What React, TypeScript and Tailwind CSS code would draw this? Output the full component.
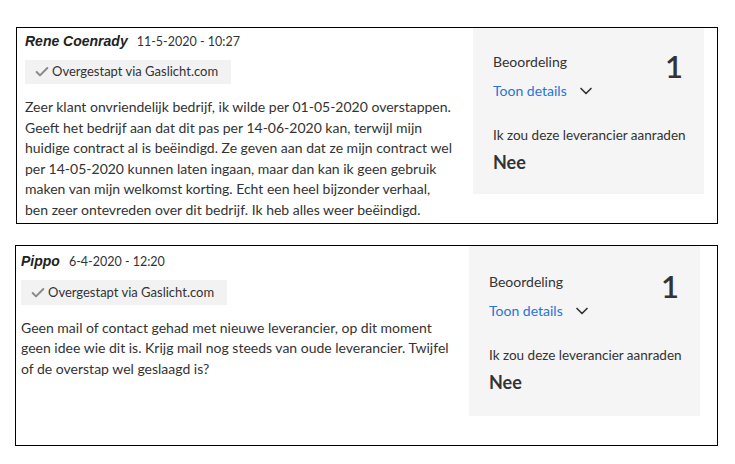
import { Check, ChevronDown } from "lucide-react";

type Review = {
    name: string;
    date: string;
    lines: string[];
    score: number;
    advise: string;
};

const reviews: Review[] = [
    {
        name: "Rene Coenrady",
        date: "11-5-2020 - 10:27",
        lines: [
            "Zeer klant onvriendelijk bedrijf, ik wilde per 01-05-2020 overstappen.",
            "Geeft het bedrijf aan dat dit pas per 14-06-2020 kan, terwijl mijn",
            "huidige contract al is beëindigd. Ze geven aan dat ze mijn contract wel",
            "per 14-05-2020 kunnen laten ingaan, maar dan kan ik geen gebruik",
            "maken van mijn welkomst korting. Echt een heel bijzonder verhaal,",
            "ben zeer ontevreden over dit bedrijf. Ik heb alles weer beëindigd.",
        ],
        score: 1,
        advise: "Nee",
    },
    {
        name: "Pippo",
        date: "6-4-2020 - 12:20",
        lines: [
            "Geen mail of contact gehad met nieuwe leverancier, op dit moment",
            "geen idee wie dit is. Krijg mail nog steeds van oude leverancier. Twijfel",
            "of de overstap wel geslaagd is?",
        ],
        score: 1,
        advise: "Nee",
    },
];

function Rating({ review, className }: { review: Review; className: string }) {
    return (
        <div className={"bg-[#f5f5f5] w-[231px] pl-5 pr-[21px] " + className}>
            <div className="flex justify-between items-start">
                <div>
                    <div className="text-[14px] leading-5 text-[#333]">Beoordeling</div>
                    <button className="mt-[9px] flex items-center gap-[9px] text-[14px] leading-5 text-[#2b73d8]">
                        Toon details
                        <ChevronDown className="w-[20px] h-[20px] text-[#333]" strokeWidth={2} />
                    </button>
                </div>
                <span className="text-[31px] leading-none font-semibold text-[#333] -mt-[1px]">{review.score}</span>
            </div>
            <div className="mt-[24px] whitespace-nowrap text-[13.5px] leading-5 text-[#333]">
                Ik zou deze leverancier aanraden
            </div>
            <div className="mt-[5px] text-[18px] leading-6 font-bold text-[#333]">{review.advise}</div>
        </div>
    );
}

function Body({ review, pl, pt, badgeH }: { review: Review; pl: string; pt: string; badgeH: string }) {
    return (
        <div className={"flex-1 " + pl + " " + pt}>
            <div className="flex items-baseline gap-[9px]">
                <span className="font-['Liberation_Sans',sans-serif] font-bold italic text-[14px] text-[#222]">
                    {review.name}
                </span>
                <span className="text-[12.5px]">{review.date}</span>
            </div>
            <div className={"mt-[8px] inline-flex items-center w-[206px] bg-[#f2f2f2] pl-[9px] text-[13px] " + badgeH}>
                <Check className="w-[16px] h-[16px] text-[#8a8a8a] mr-[2px]" strokeWidth={3} />
                Overgestapt via Gaslicht.com
            </div>
            <p className="mt-[11px] text-[14px] leading-[20.6px] whitespace-nowrap">
                {review.lines.map((line, i) => (
                    <span key={i} className="block">
                        {line}
                    </span>
                ))}
            </p>
        </div>
    );
}

export default function App() {
    return (
        <div className="w-[735px] h-[464px] bg-white pt-[27px] font-['Lato',sans-serif] text-[#333]">
            <div className="ml-[16px] w-[702px] h-[197px] border border-black flex">
                <Body review={reviews[0]} pl="pl-[8px]" pt="pt-[3px]" badgeH="h-[24px]" />
                <Rating review={reviews[0]} className="h-[166px] pt-[24px] mr-[13px]" />
            </div>

            <div className="mt-[21px] ml-[15px] w-[703px] h-[201px] border border-black flex">
                <Body review={reviews[1]} pl="pl-[5px]" pt="pt-[5px]" badgeH="h-[25px]" />
                <Rating review={reviews[1]} className="h-[170px] pt-[26px] mr-[17px]" />
            </div>
        </div>
    );
}
